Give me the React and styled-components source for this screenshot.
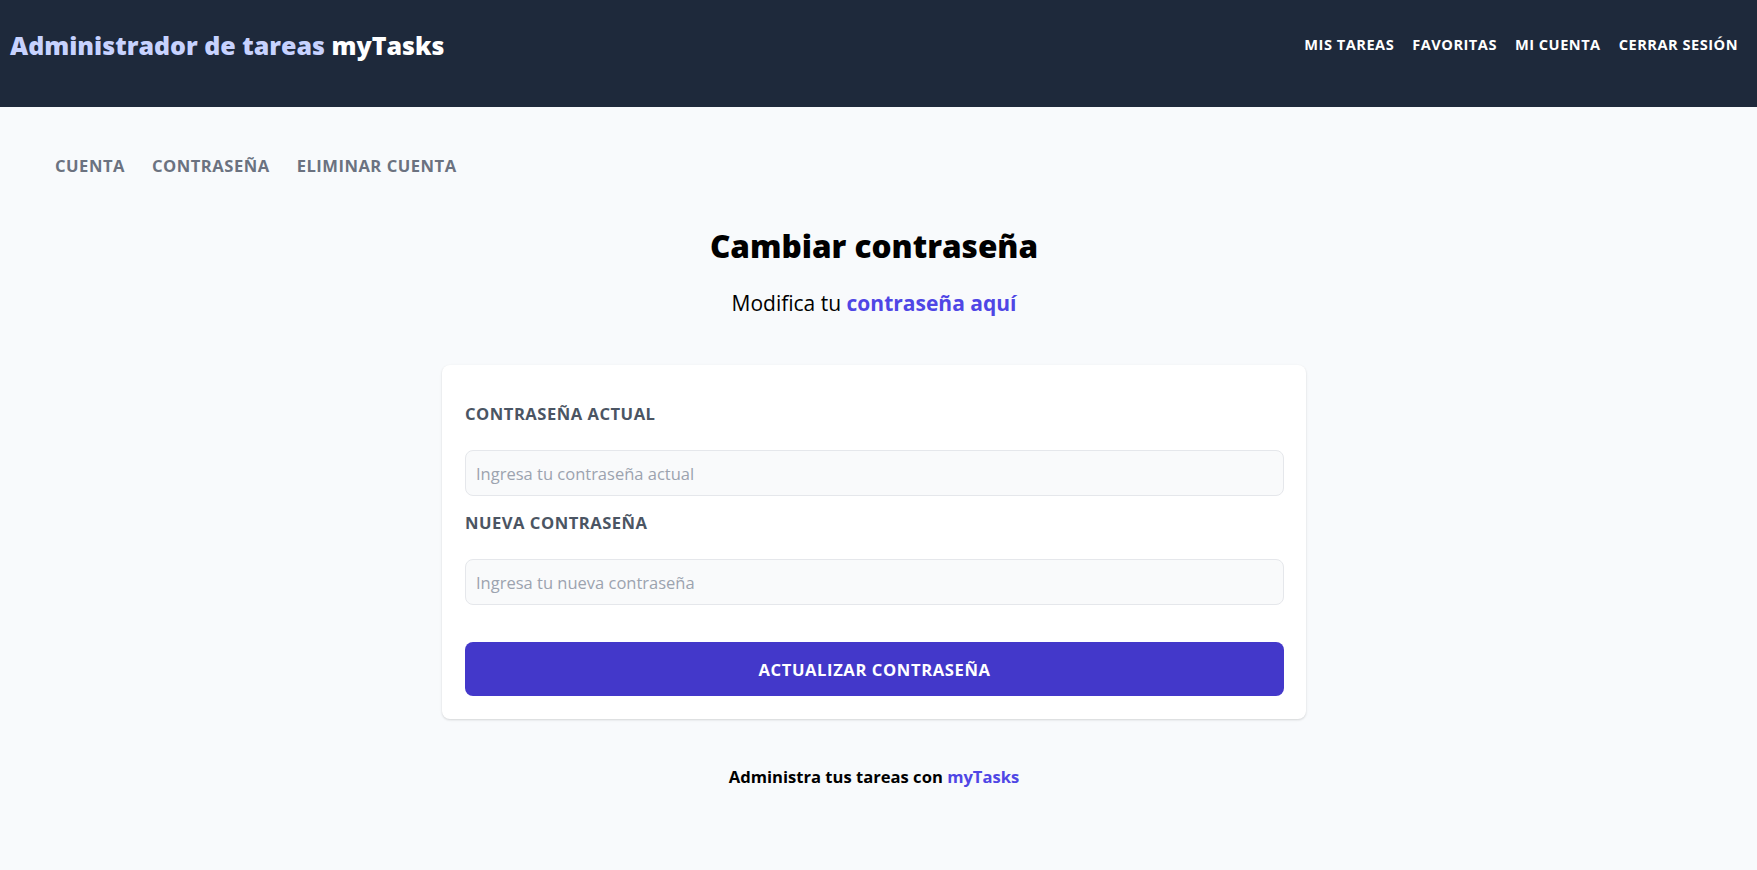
import React from 'react';
import styled, { createGlobalStyle } from 'styled-components';

const GlobalStyle = createGlobalStyle`
  * { box-sizing: border-box; }
  body {
    margin: 0;
    background: #f8fafc;
    font-family: "Open Sans", "Noto Sans", sans-serif;
    color: #000;
  }
`;

const Header = styled.header`
  height: 107px;
  background: #1e293b;
  display: flex;
  align-items: flex-start;
  justify-content: space-between;
  padding: 28px 19px 0 10px;
`;

const Brand = styled.h1`
  margin: 0;
  font-size: 25px;
  line-height: 34px;
  font-weight: 800;
  color: #c7d2fe;
  span { color: #fff; }
`;

const TopNav = styled.nav`
  display: flex;
  gap: 18px;
  padding-top: 6px;
`;

const TopLink = styled.a`
  color: #fff;
  font-size: 14.6px;
  line-height: 20px;
  font-weight: 700;
  letter-spacing: 0.5px;
  text-transform: uppercase;
  text-decoration: none;
`;

const Main = styled.main`
  padding-right: 9px;
`;

const SubNav = styled.nav`
  display: flex;
  gap: 27px;
  padding: 47px 55px 0;
`;

const SubLink = styled.a`
  color: #6b7280;
  font-size: 16.6px;
  line-height: 24px;
  font-weight: 700;
  letter-spacing: 0.5px;
  text-transform: uppercase;
  text-decoration: none;
`;

const Title = styled.h2`
  margin: 50px 0 0;
  text-align: center;
  font-size: 31.5px;
  line-height: 36px;
  font-weight: 800;
`;

const Lead = styled.p`
  margin: 25px 0 0;
  text-align: center;
  font-size: 21px;
  line-height: 28px;
  span { color: #4f46e5; font-weight: 700; }
`;

const Card = styled.form`
  width: 864px;
  margin: 48px auto 0;
  background: #fff;
  border-radius: 8px;
  box-shadow: 0 1px 3px rgba(0,0,0,0.1), 0 1px 2px rgba(0,0,0,0.06);
  padding: 37px 22px 23px 23px;
  display: flex;
  flex-direction: column;
`;

const Label = styled.label`
  display: block;
  color: #4b5563;
  font-size: 16.6px;
  line-height: 24px;
  font-weight: 700;
  letter-spacing: 0.5px;
  text-transform: uppercase;
  margin-top: ${p => p.$top || 0}px;
`;

const Input = styled.input`
  display: block;
  width: 100%;
  height: 46px;
  margin-top: 24px;
  padding: 0 10px;
  border: 1px solid #e5e7eb;
  border-radius: 8px;
  background: #f9fafb;
  font-family: inherit;
  font-size: 16.5px;
  &::placeholder { color: #9ca3af; }
`;

const Submit = styled.button`
  margin-top: 37px;
  height: 54px;
  width: 100%;
  border: none;
  border-radius: 8px;
  background: #4338ca;
  color: #fff;
  font-family: inherit;
  font-size: 16.6px;
  font-weight: 700;
  letter-spacing: 0.6px;
  text-transform: uppercase;
  cursor: pointer;
`;

const Footer = styled.p`
  margin: 46px 0 0;
  text-align: center;
  font-size: 16.6px;
  line-height: 24px;
  font-weight: 700;
  span { color: #4f46e5; }
`;

export default function App() {
  return (
    <>
      <GlobalStyle />
      <Header>
        <Brand>Administrador de tareas <span>myTasks</span></Brand>
        <TopNav>
          <TopLink href="#">Mis tareas</TopLink>
          <TopLink href="#">Favoritas</TopLink>
          <TopLink href="#">Mi cuenta</TopLink>
          <TopLink href="#">Cerrar sesión</TopLink>
        </TopNav>
      </Header>
      <Main>
        <SubNav>
          <SubLink href="#">Cuenta</SubLink>
          <SubLink href="#">Contraseña</SubLink>
          <SubLink href="#">Eliminar cuenta</SubLink>
        </SubNav>
        <Title>Cambiar contraseña</Title>
        <Lead>Modifica tu <span>contraseña aquí</span></Lead>
        <Card onSubmit={e => e.preventDefault()}>
          <Label htmlFor="current">Contraseña actual</Label>
          <Input id="current" type="password" placeholder="Ingresa tu contraseña actual" />
          <Label htmlFor="new" $top={15}>Nueva contraseña</Label>
          <Input id="new" type="password" placeholder="Ingresa tu nueva contraseña" />
          <Submit type="submit">Actualizar contraseña</Submit>
        </Card>
        <Footer>Administra tus tareas con <span>myTasks</span></Footer>
      </Main>
    </>
  );
}
